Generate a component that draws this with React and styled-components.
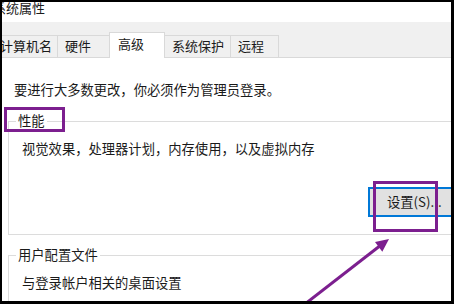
import styled, { createGlobalStyle } from 'styled-components';

const PURPLE = '#7c1f8f';
const LINE = '#dcdcdc';

const tabs = [
    { text: '计算机名', width: 66 },
    { text: '硬件', width: 53 },
    { text: '高级', width: 56, selected: true },
    { text: '系统保护', width: 67 },
    { text: '远程', width: 49 },
];

const GlobalStyle = createGlobalStyle`
  html, body {
    margin: 0;
    padding: 0;
    background: #000;
  }
  body {
    font-family: "Noto Sans CJK SC", "Noto Sans", sans-serif;
    color: #1a1a1a;
  }
`;

const Frame = styled.div`
  width: 454px;
  height: 304px;
  box-sizing: border-box;
  padding: 2px 3px 3px 2px;
  background: #000;
`;

const Dialog = styled.div`
  position: relative;
  width: 100%;
  height: 100%;
  background: #fff;
  overflow: hidden;
  font-size: 13.3px;
`;

const TitleBar = styled.div`
  height: 20px;
  line-height: 11px;
  margin-left: -9px;
  font-size: 13px;
  white-space: nowrap;
`;

const TabStrip = styled.div`
  height: 36px;
  box-sizing: border-box;
  display: flex;
  align-items: flex-end;
  background: #f0f0f0;
  border-bottom: 1px solid #d9d9d9;
  margin-left: -9px;
  font-size: 13px;
`;

const Tab = styled.div`
  position: relative;
  box-sizing: border-box;
  width: ${p => p.w}px;
  height: ${p => (p.selected ? 26 : 22)}px;
  line-height: ${p => (p.selected ? 22 : 20)}px;
  margin-left: -1px;
  margin-bottom: ${p => (p.selected ? -1 : 0)}px;
  padding-left: ${p => (p.selected ? 8 : 7)}px;
  background: ${p => (p.selected ? '#fff' : '#f0f0f0')};
  border: 1px solid #d9d9d9;
  border-bottom: none;
  z-index: ${p => (p.selected ? 1 : 0)};
  white-space: nowrap;
`;

const Panel = styled.div`
  padding-left: 6px;
`;

const Notice = styled.div`
  margin: 23px 0 0 6px;
  line-height: 18px;
`;

const Group = styled.fieldset`
  box-sizing: border-box;
  width: 455px;
  margin: ${p => p.top}px 0 0 0;
  padding: 10px 8px ${p => p.bottom}px 13px;
  border: 1px solid ${LINE};
  min-inline-size: 0;
`;

const Legend = styled.legend`
  position: relative;
  margin-left: -6px;
  padding: 0 2px;
  line-height: 18px;
`;

const Highlight = styled.span`
  position: absolute;
  top: ${p => p.t}px;
  left: ${p => p.l}px;
  right: ${p => p.r}px;
  bottom: ${p => p.b}px;
  border: 3px solid ${PURPLE};
  pointer-events: none;
`;

const GroupText = styled.div`
  line-height: 18px;
`;

const ButtonRow = styled.div`
  display: flex;
  justify-content: flex-end;
  margin-top: 29px;
`;

const Button = styled.div`
  position: relative;
  box-sizing: border-box;
  width: 86px;
  height: 30px;
  padding-left: 17px;
  line-height: 26px;
  background: #e1e1e1;
  border: 2px solid #0078d7;
  white-space: nowrap;
`;

const Arrow = styled.svg`
  position: absolute;
  left: 0;
  top: 0;
  pointer-events: none;
`;

export default function App() {
    return (
        <Frame>
            <GlobalStyle />
            <Dialog>
                <TitleBar>系统属性</TitleBar>
                <TabStrip>
                    {tabs.map(t => (
                        <Tab key={t.text} w={t.width} selected={t.selected}>{t.text}</Tab>
                    ))}
                </TabStrip>
                <Panel>
                    <Notice>要进行大多数更改，你必须作为管理员登录。</Notice>
                    <Group top={13} bottom={17}>
                        <Legend>
                            性能
                            <Highlight t={-5} l={-12} r={-18} b={-2} />
                        </Legend>
                        <GroupText>视觉效果，处理器计划，内存使用，以及虚拟内存</GroupText>
                        <ButtonRow>
                            <Button>
                                设置(S)...
                                <Highlight t={-8} l={3} r={14} b={-17} />
                            </Button>
                        </ButtonRow>
                    </Group>
                    <Group top={11} bottom={20}>
                        <Legend>用户配置文件</Legend>
                        <GroupText>与登录帐户相关的桌面设置</GroupText>
                    </Group>
                </Panel>
                <Arrow width="449" height="299" viewBox="0 0 449 299">
                    <line x1="303" y1="302" x2="379" y2="243" stroke={PURPLE} strokeWidth="3" />
                    <polygon points="387,237 380.3,249.7 373,240.1" fill={PURPLE} />
                </Arrow>
            </Dialog>
        </Frame>
    );
}
